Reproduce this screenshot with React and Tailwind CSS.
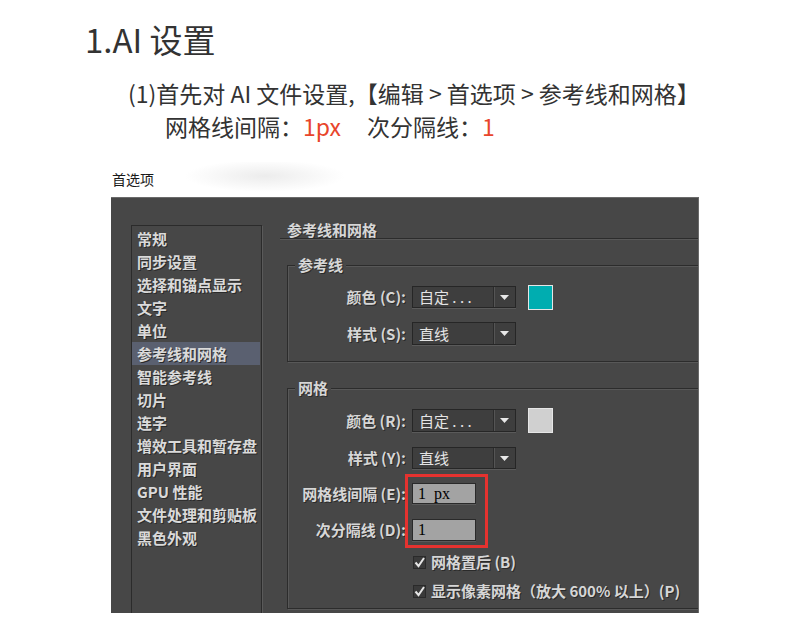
import React from "react";

const cjk = { fontFamily: '"Noto Sans CJK SC", "Noto Sans", sans-serif' };

const listItems = [
  "常规",
  "同步设置",
  "选择和锚点显示",
  "文字",
  "单位",
  "参考线和网格",
  "智能参考线",
  "切片",
  "连字",
  "增效工具和暂存盘",
  "用户界面",
  "GPU 性能",
  "文件处理和剪贴板",
  "黑色外观",
];

const Label = ({ children }) => (
  <div className="w-[118px] text-right text-[15px] leading-[20px] font-bold text-[#d6d6d6] [text-shadow:1px_1px_0_#2a2a2a]">
    {children}
  </div>
);

const Select = ({ value }) => (
  <div className="ml-[6px] flex h-full w-[104px] items-center border border-[#262626] bg-[#3e3e3e] shadow-[0_1px_0_#5a5a5a]">
    <span className="flex-1 pl-[6px] text-[15px] leading-[20px] text-[#e4e4e4]">{value}</span>
    <span className="flex h-full w-[22px] items-center justify-center border-l border-[#2c2c2c] shadow-[inset_1px_0_0_#555]">
      <svg width="9" height="5" viewBox="0 0 9 5">
        <path d="M0 0 H9 L4.5 5 Z" fill="#e8e8e8" />
      </svg>
    </span>
  </div>
);

const Swatch = ({ color }) => (
  <div className={`ml-[12px] h-[25px] w-[25px] border border-[#e6e6e6] ${color}`} />
);

const Input = ({ value }) => (
  <div
    className="ml-[6px] flex h-full w-[64px] items-center whitespace-pre border border-[#2a2a2a] bg-[#a3a3a3] pl-[5px] text-[16px] text-black shadow-[0_1px_0_#5a5a5a]"
    style={{ fontFamily: '"Liberation Serif", serif' }}
  >
    {value}
  </div>
);

const Check = ({ children }) => (
  <div className="flex h-[20px] items-center pl-[125px]">
    <span className="flex h-[13px] w-[13px] items-center justify-center border border-[#2a2a2a] bg-[#3a3a3a]">
      <svg width="11" height="11" viewBox="0 0 11 11">
        <path d="M1.5 5.5 L4.5 9 L10 1" stroke="#e6e6e6" strokeWidth="2" fill="none" />
      </svg>
    </span>
    <span className="ml-[5px] text-[15px] leading-[20px] font-bold text-[#d6d6d6] [text-shadow:1px_1px_0_#2a2a2a]">
      {children}
    </span>
  </div>
);

const Legend = ({ children }) => (
  <legend className="ml-[7px] bg-[#474747] px-[3px] text-[15px] leading-[20px] font-bold text-[#d6d6d6] [text-shadow:1px_1px_0_#2a2a2a]">
    {children}
  </legend>
);

export default function App() {
  return (
    <div className="h-[636px] w-[800px] overflow-hidden bg-white" style={cjk}>
      {/* heading */}
      <div className="pl-[85px] pt-[17px] text-[33px] leading-[44px] text-[#333]">1.AI 设置</div>
      <div className="mt-[16px] pl-[128px] text-[23px] leading-[33px] text-[#333]">
        (1)首先对 AI 文件设置,【编辑 &gt; 首选项 &gt; 参考线和网格】
      </div>
      <div className="flex pl-[165px] text-[23px] leading-[33px] text-[#333]">
        <span>网格线间隔：</span>
        <span className="text-[#e8452c]">1px</span>
        <span className="ml-[26px]">次分隔线：</span>
        <span className="text-[#e8452c]">1</span>
      </div>

      {/* screenshot */}
      <div className="mt-[19px] flex h-[35px] items-center bg-[radial-gradient(ellipse_80px_16px_at_265px_14px,#ececec,#ffffff)] pl-[112px] text-[14px] text-[#1a1a1a]">
        首选项
      </div>
      <div className="ml-[111px] flex h-[416px] w-[588px] overflow-hidden border-t border-r border-[#6a6a6a] bg-[#474747] pl-[20px] pt-[27px]">
        {/* left list */}
        <div className="h-[420px] w-[131px] shrink-0 border border-[#2b2b2b] pt-[1px] shadow-[1px_1px_0_#5a5a5a]">
          {listItems.map((item, i) => (
            <div
              key={item}
              className={`mr-[1px] h-[23px] pl-[5px] text-[15px] leading-[23px] font-bold text-[#dadada] [text-shadow:1px_1px_0_#2a2a2a] ${
                i === 5 ? "bg-[#5a6070]" : ""
              }`}
            >
              {item}
            </div>
          ))}
        </div>

        {/* right panel */}
        <div className="ml-[18px] w-[440px] shrink-0 -mt-[27px] pt-[24px]">
          <div className="border-b border-[#2c2c2c] pl-[7px] text-[15px] leading-[16px] font-bold text-[#d6d6d6] shadow-[0_1px_0_#585858] [text-shadow:1px_1px_0_#2a2a2a]">
            参考线和网格
          </div>

          <fieldset className="ml-[7px] mt-[16px] w-[430px] border border-[#2c2c2c] shadow-[inset_1px_1px_0_#585858,1px_1px_0_#585858]">
            <Legend>参考线</Legend>
            <div className="flex flex-col pb-[16px] pt-[11px]">
              <div className="flex h-[22px] items-center">
                <Label>颜色 (C):</Label>
                <Select value="自定 . . ." />
                <Swatch color="bg-[#00adb0]" />
              </div>
              <div className="mt-[14px] flex h-[23px] items-center">
                <Label>样式 (S):</Label>
                <Select value="直线" />
              </div>
            </div>
          </fieldset>

          <fieldset className="ml-[7px] mt-[16px] w-[430px] border border-[#2c2c2c] shadow-[inset_1px_1px_0_#585858,1px_1px_0_#585858]">
            <Legend>网格</Legend>
            <div className="flex flex-col pb-[7px] pt-[11px]">
              <div className="flex h-[23px] items-center">
                <Label>颜色 (R):</Label>
                <Select value="自定 . . ." />
                <Swatch color="bg-[#d0d0d0]" />
              </div>
              <div className="mt-[15px] flex h-[22px] items-center">
                <Label>样式 (Y):</Label>
                <Select value="直线" />
              </div>
              <div className="relative mt-[14px]">
                <div className="flex h-[21px] items-center">
                  <Label>网格线间隔 (E):</Label>
                  <Input value="1  px" />
                </div>
                <div className="mt-[15px] flex h-[22px] items-center">
                  <Label>次分隔线 (D):</Label>
                  <Input value="1" />
                </div>
                {/* red annotation box */}
                <div className="absolute left-[117px] top-[-9px] h-[74px] w-[83px] border-[3px] border-[#e5322f]" />
              </div>
              <div className="mt-[11px]">
                <Check>网格置后 (B)</Check>
              </div>
              <div className="mt-[9px]">
                <Check>显示像素网格（放大 600% 以上）(P)</Check>
              </div>
            </div>
          </fieldset>
        </div>
      </div>
    </div>
  );
}
